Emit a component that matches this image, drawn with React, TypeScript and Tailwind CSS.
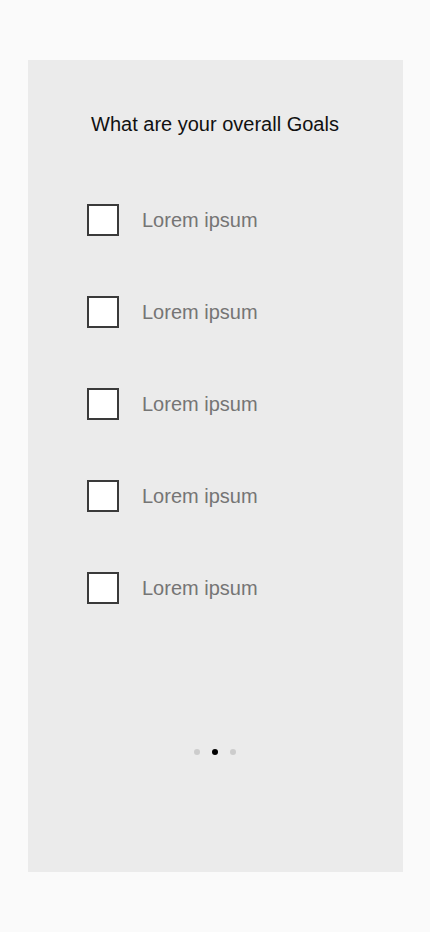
const goals = ["Lorem ipsum", "Lorem ipsum", "Lorem ipsum", "Lorem ipsum", "Lorem ipsum"];

export default function App() {
  return (
    <div className="min-h-[932px] w-full bg-[#fafafa] pt-[60px] font-['Liberation_Sans',Arial,sans-serif]">
      <div className="mx-[28px] flex h-[812px] w-[375px] flex-col items-center bg-[#ebebeb] pt-[53px] pr-[2px]">
        <h1 className="pl-[1px] text-[20px] leading-[23px] text-[#111]">What are your overall Goals</h1>

        <ul className="mt-[68px] flex w-full flex-col gap-[60px] pl-[59px]">
          {goals.map((g, i) => (
            <li key={i} className="flex h-[32px] items-center gap-[23px]">
              <span className="box-border h-[32px] w-[32px] border-2 border-[#3a3a3a] bg-white" />
              <span className="text-[20px] leading-[23px] text-[#757575]">{g}</span>
            </li>
          ))}
        </ul>

        <div className="mt-[145px] flex items-center gap-[12px]">
          <span className="h-[6px] w-[6px] rounded-full bg-[#cccccc]" />
          <span className="h-[6px] w-[6px] rounded-full bg-black" />
          <span className="h-[6px] w-[6px] rounded-full bg-[#cccccc]" />
        </div>
      </div>
    </div>
  );
}
